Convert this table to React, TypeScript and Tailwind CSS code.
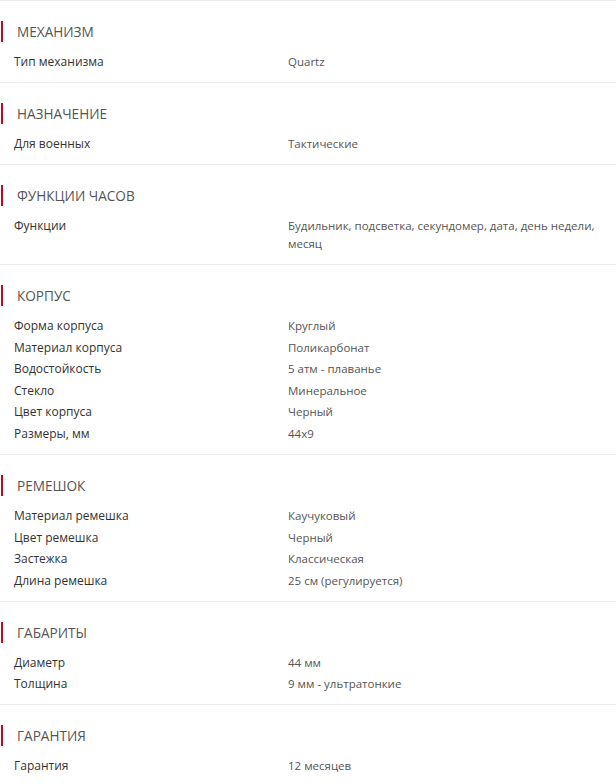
import React from "react";

type Section = { title: string; rows: [string, string][] };

const sections: Section[] = [
  { title: "Механизм", rows: [["Тип механизма", "Quartz"]] },
  { title: "Назначение", rows: [["Для военных", "Тактические"]] },
  {
    title: "Функции часов",
    rows: [["Функции", "Будильник, подсветка, секундомер, дата, день недели, месяц"]],
  },
  {
    title: "Корпус",
    rows: [
      ["Форма корпуса", "Круглый"],
      ["Материал корпуса", "Поликарбонат"],
      ["Водостойкость", "5 атм - плаванье"],
      ["Стекло", "Минеральное"],
      ["Цвет корпуса", "Черный"],
      ["Размеры, мм", "44x9"],
    ],
  },
  {
    title: "Ремешок",
    rows: [
      ["Материал ремешка", "Каучуковый"],
      ["Цвет ремешка", "Черный"],
      ["Застежка", "Классическая"],
      ["Длина ремешка", "25 см (регулируется)"],
    ],
  },
  {
    title: "Габариты",
    rows: [
      ["Диаметр", "44 мм"],
      ["Толщина", "9 мм - ультратонкие"],
    ],
  },
  { title: "Гарантия", rows: [["Гарантия", "12 месяцев"]] },
];

export default function App() {
  return (
    <div
      className="w-[616px] h-[784px] overflow-hidden bg-white"
      style={{ fontFamily: '"Open Sans", "Noto Sans", sans-serif' }}
    >
      {sections.map((s) => (
        <div key={s.title} className="border-t border-[#ececec] pt-[20px] pb-[11px]">
          <div className="flex items-center h-[21px]">
            <div className="ml-[1px] w-[2px] h-[21px] bg-[#d0021b]" />
            <div className="ml-[14px] text-[13.6px] leading-[21px] uppercase text-[#555]">
              {s.title}
            </div>
          </div>
          <div className="mt-[11px] flex flex-col gap-[3.6px]">
            {s.rows.map(([k, v]) => (
              <div key={k} className="flex leading-[18px] pl-[14px] pr-[8px]">
                <div className="w-[274px] shrink-0 text-[12px] text-[#333]">{k}</div>
                <div className="flex-1 text-[11.5px] text-[#555]">{v}</div>
              </div>
            ))}
          </div>
        </div>
      ))}
    </div>
  );
}
